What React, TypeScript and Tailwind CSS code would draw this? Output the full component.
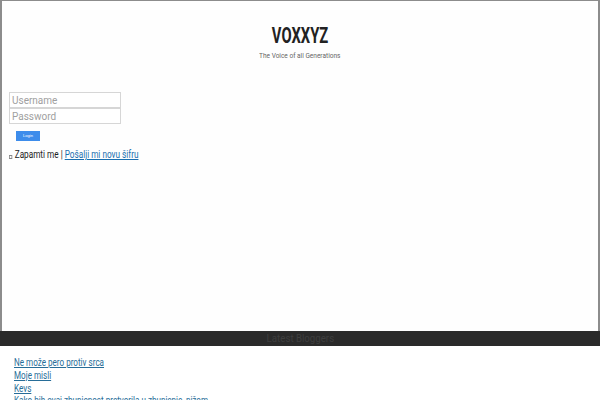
import React from "react";

const roboto = { fontFamily: 'Roboto, "Liberation Sans", sans-serif' };

export default function App() {
  return (
    <div className="w-[600px] h-[400px] overflow-hidden bg-white flex flex-col" style={roboto}>
      <div className="h-[331px] shrink-0 border-t border-l-2 border-r-2 border-[#8c8c8c] bg-[#fefefe] flex flex-col">
        <div className="pt-[23px] flex flex-col items-center">
          <div className="text-[22px] leading-[24px] font-bold text-[#222] scale-x-[0.67] origin-center">VOXXYZ</div>
          <div className="mt-[3px] text-[7.5px] leading-[10px] text-[#666] scale-x-[0.87] origin-center whitespace-nowrap">The Voice of all Generations</div>
        </div>
        <div className="mt-[31px] pl-[7px] flex flex-col">
          <input
            placeholder="Username"
            className="w-[112px] h-[16px] border border-[#d6d6d6] px-[2px] text-[10px] leading-[14px] text-[#333] placeholder:text-[#a0a0a0] outline-none bg-white"
          />
          <input
            placeholder="Password"
            className="w-[112px] h-[16px] border border-[#d6d6d6] px-[2px] text-[10px] leading-[14px] text-[#333] placeholder:text-[#a0a0a0] outline-none bg-white"
          />
          <div className="mt-[7px] pl-[7px]">
            <button className="w-[24px] h-[10px] bg-[#3d8ceb] text-white text-[4px] leading-[10px] flex items-center justify-center">Login</button>
          </div>
          <div className="mt-[8px] flex items-center text-[10px] leading-[12px] text-[#222] scale-x-[0.82] origin-left whitespace-nowrap">
            <span className="w-[4px] h-[4px] border border-[#888] mr-[3px] mt-[3px]"></span>
            <span>Zapamti me |&nbsp;</span>
            <a href="#" className="text-[#1a6fb0] underline">Pošalji mi novu šifru</a>
          </div>
        </div>
      </div>
      <div className="h-[15px] shrink-0 bg-[#2a2a2a] flex items-center justify-center text-[11px] leading-[15px] text-[#3e3e3e]">
        <span className="scale-x-[0.88] whitespace-nowrap">Latest Bloggers</span>
      </div>
      <div className="pl-[14px] pt-[11px]">
        <div className="flex flex-col items-start text-[10px] leading-[12.8px] scale-x-[0.81] origin-left">
          <a href="#" className="text-[#276d98] underline whitespace-nowrap">Ne može pero protiv srca</a>
          <a href="#" className="text-[#276d98] underline whitespace-nowrap">Moje misli</a>
          <a href="#" className="text-[#276d98] underline whitespace-nowrap">Kevs</a>
          <a href="#" className="text-[#276d98] underline whitespace-nowrap">Kako bih ovaj zbunjenost pretvorila u zbunjenje, nižom</a>
        </div>
      </div>
    </div>
  );
}
